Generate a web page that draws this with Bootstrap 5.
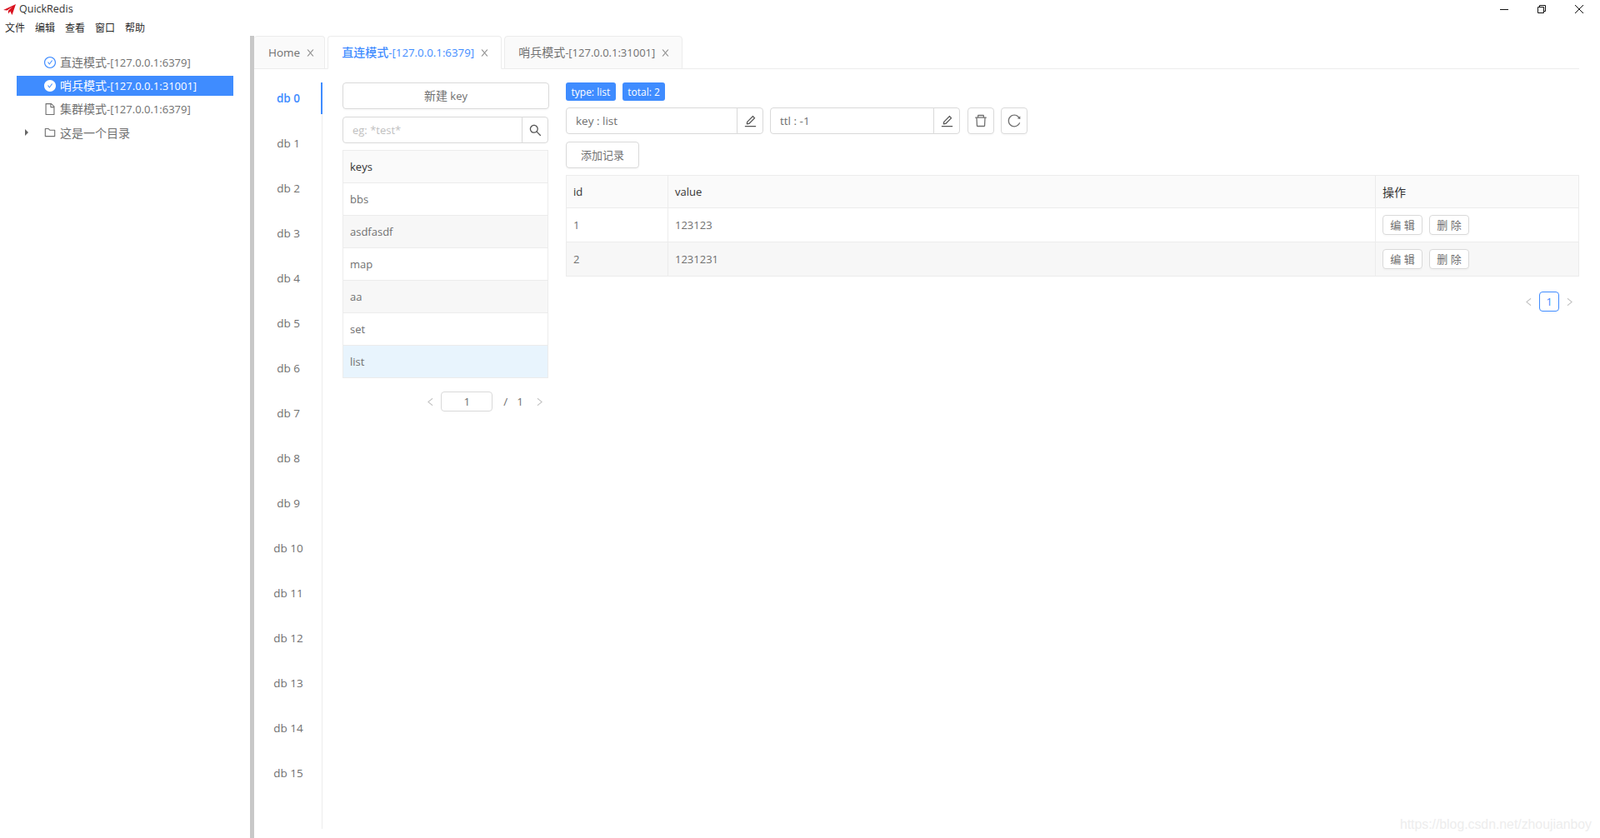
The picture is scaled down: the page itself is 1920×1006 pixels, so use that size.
<!DOCTYPE html>
<html lang="zh-CN">
<head>
<meta charset="utf-8">
<title>QuickRedis</title>
<link href="https://cdn.jsdelivr.net/npm/bootstrap@5.3.0/dist/css/bootstrap.min.css" rel="stylesheet">
<style>
:root{--qr-blue:#3f8cff;--qr-text:#707070;--qr-line:#ececec;--qr-border:#d9d9d9}
html,body{height:100%;overflow:hidden}
body{font-family:"Open Sans","Noto Sans CJK SC",sans-serif;font-size:13px;color:var(--qr-text);background:#fff;position:relative}
.zh{font-size:14px}
.ico{width:1em;height:1em;fill:currentColor;display:block;flex:none}
.qr-title{height:22px;padding-left:4px}
.qr-title-text{font-size:12.5px;color:#333;margin-left:4px}
.qr-logo{width:15px;height:13px}
.qr-winctl{gap:0;margin-right:3px}
.qr-winbtn{width:45px;height:20px;color:#111}
.qr-winbtn svg{width:12px;height:12px;fill:none;stroke:currentColor;stroke-width:1}
.qr-menu{height:21px;padding:2px 0 0 6px;gap:12px;font-size:12px;color:#2a2a2a}
.qr-main{height:963px}
.qr-side{width:300px;padding-top:20px}
.qr-split{width:5px;background:#c8c8c8}
.qr-node{height:24px;margin:0 20px 4px;width:260px;padding-left:33px;white-space:nowrap}
.qr-node .ico{font-size:14px;margin-right:5px}
.qr-node.on{background:var(--qr-blue);color:#fff}
.qr-caret{width:0;height:0;border-left:4px solid #666;border-top:4px solid transparent;border-bottom:4px solid transparent;margin-left:-23px;margin-right:19px}
.qr-content{min-width:0;padding-right:25px}
.qr-tabs{height:40px;gap:3px;border-bottom:1px solid var(--qr-line);flex-wrap:nowrap}
.qr-tabs .nav-link{height:40px;margin:0;padding:0 14px 0 16px;border:1px solid var(--qr-line);border-radius:4px 4px 0 0;background:#fafafa;color:var(--qr-text);font-size:13px;gap:7px;white-space:nowrap}
.qr-tabs .nav-link:first-child{border-left:0;padding:0 11px 0 17px;font-size:13.5px}
.qr-tabs .nav-link .ico{font-size:11px;color:#8a8a8a}
.qr-tabs .nav-link.active{background:#fff;color:var(--qr-blue);border-bottom-color:#fff;font-weight:500;font-size:13.3px}
.qr-body{padding-top:16px}
.qr-rail{width:82px;height:896px;border-right:1px solid var(--qr-line);font-size:13.5px}
.qr-db{height:38px;margin-bottom:16px;margin-right:-1px;border-right:2px solid transparent;padding-left:2px}
.qr-db.on{color:var(--qr-blue);font-weight:600;border-right-color:var(--qr-blue)}
.qr-keys{width:248px;margin-left:24px;margin-right:20px}
.qr-btn{background:#fff;border:1px solid var(--qr-border);border-radius:4px;color:var(--qr-text);font-size:13px;height:32px;padding:0;box-shadow:0 2px 0 rgba(0,0,0,.015);line-height:1}
.qr-input{height:32px;border:1px solid var(--qr-border);border-radius:4px;font-size:13.5px;color:var(--qr-text);padding:0 11px}
.qr-input::placeholder{color:#bfbfbf}
.qr-search{margin-top:9px;width:247px;margin-bottom:8px}
.qr-search .qr-input{font-size:13px}
.qr-igbtn{width:32px;flex:none;background:#fff;border:1px solid var(--qr-border);border-radius:0 4px 4px 0;margin-left:-1px;height:32px;color:#555;padding:0}
.qr-igbtn .ico{font-size:15px}
.qr-table{border-collapse:collapse;width:100%;table-layout:fixed;margin:0;font-size:13px;color:var(--qr-text)}
.qr-table th,.qr-table td{border:1px solid var(--qr-line);padding:2px 8px 0;background:#fff;color:var(--qr-text);font-weight:400;vertical-align:middle;box-shadow:none}
.qr-table th{background:#fafafa;color:#333;font-weight:500;height:39px}
.qr-table th.zh{font-weight:400;padding-top:0}
.qr-table td{height:39px}
.qr-table tr.alt td{background:#f7f7f7}
.qr-table tr.sel td{background:#e8f4fd}
.qr-table td.cell-r{height:41px}
.qr-table td.cell-o{padding-top:0}
.qr-keytable{width:247px}
.qr-keypager{height:24px;margin-top:16px;width:247px;padding-right:5px;font-size:13.5px;color:#707070}
.qr-arrow{font-size:11px;color:#bdbdbd}
.qr-arrow-end{margin-left:14px}
.qr-pageinput{width:62px;height:24px;border:1px solid var(--qr-border);border-radius:4px;text-align:center;font-size:13.5px;color:var(--qr-text);margin:0 13px 0 7px;padding:0}
.qr-slash{margin-right:11px}
.qr-right{min-width:0}
.qr-tags{gap:8px;height:22px;margin-bottom:8px;padding-top:0}
.qr-tag{background:var(--qr-blue);color:#fff;border-radius:3px;font-size:12px;font-weight:500;height:22px;padding:0 6.5px;line-height:23px}
.qr-tools{height:32px;margin-bottom:9px}
.qr-keygroup{width:237px;margin-right:8px}
.qr-ttlgroup{width:228px;margin-right:9px}
.qr-keygroup .form-control,.qr-ttlgroup .form-control{min-width:0}
.qr-square{width:32px;flex:none;margin-right:8px}
.qr-square .ico{font-size:16px;margin:auto}
.qr-add{width:88px;height:32px;margin-bottom:8px;display:block}
.col-id{width:122px}
.col-ops{width:244px}
.qr-mini{height:24px;font-size:13px;margin-right:8px;width:48px}
.qr-pager{margin-top:18px;padding-right:6px;gap:7px}
.qr-pager-cur{width:24px;height:24px;border:1px solid var(--qr-blue);border-radius:4px;color:var(--qr-blue);font-size:13.5px}
.qr-water{position:absolute;right:10px;top:978px;font-family:"Liberation Sans",sans-serif;font-size:15.8px;color:#ededed}
</style>
</head>
<body>
<svg width="0" height="0" class="position-absolute">
<symbol id="i-check" viewBox="64 64 896 896"><path d="M699 353h-46.9c-10.2 0-19.9 4.9-25.9 13.3L469 584.3l-71.2-98.8c-6-8.3-15.6-13.3-25.9-13.3H325c-6.5 0-10.3 7.4-6.5 12.7l124.6 172.8a31.8 31.8 0 0 0 51.7 0l210.6-292c3.9-5.3.1-12.7-6.4-12.7z"/><path d="M512 64C264.6 64 64 264.6 64 512s200.6 448 448 448 448-200.6 448-448S759.4 64 512 64zm0 820c-205.4 0-372-166.6-372-372s166.6-372 372-372 372 166.6 372 372-166.6 372-372 372z"/></symbol>
<symbol id="i-checkf" viewBox="64 64 896 896"><path d="M512 64C264.6 64 64 264.6 64 512s200.6 448 448 448 448-200.6 448-448S759.4 64 512 64zm193.5 301.7l-210.6 292a31.8 31.8 0 0 1-51.7 0L318.5 484.9c-3.8-5.3 0-12.7 6.5-12.7h46.9c10.2 0 19.9 4.9 25.9 13.3l71.2 98.8 157.2-218c6-8.3 15.6-13.3 25.9-13.3H699c6.5 0 10.3 7.4 6.5 12.7z"/></symbol>
<symbol id="i-file" viewBox="64 64 896 896"><path d="M854.6 288.6L639.4 73.4c-6-6-14.1-9.4-22.6-9.4H192c-17.7 0-32 14.3-32 32v832c0 17.7 14.3 32 32 32h640c17.7 0 32-14.3 32-32V311.3c0-8.5-3.4-16.7-9.4-22.7zM790.2 326H602V137.8L790.2 326zm1.8 562H232V136h302v216a42 42 0 0 0 42 42h216v494z"/></symbol>
<symbol id="i-folder" viewBox="64 64 896 896"><path d="M880 298.4H521L403.7 186.2a8.15 8.15 0 0 0-5.5-2.2H144c-17.7 0-32 14.3-32 32v592c0 17.7 14.3 32 32 32h736c17.7 0 32-14.3 32-32V330.4c0-17.7-14.3-32-32-32zM840 768H184V256h188.5l119.6 114.4H840V768z"/></symbol>
<symbol id="i-close" viewBox="64 64 896 896"><path d="M563.8 512l262.5-312.9c4.4-5.2.7-13.1-6.1-13.1h-79.8c-4.7 0-9.2 2.1-12.3 5.7L511.6 449.8 295.1 191.7c-3-3.6-7.5-5.7-12.3-5.7H203c-6.8 0-10.5 7.9-6.1 13.1L459.4 512 196.9 824.9A7.95 7.95 0 0 0 203 838h79.8c4.7 0 9.2-2.1 12.3-5.7l216.5-258.1 216.5 258.1c3 3.6 7.5 5.7 12.3 5.7h79.8c6.8 0 10.5-7.9 6.1-13.1L563.8 512z"/></symbol>
<symbol id="i-search" viewBox="64 64 896 896"><path d="M909.6 854.5L649.9 594.8C690.2 542.7 712 479 712 412c0-80.2-31.3-155.4-87.9-212.1-56.6-56.7-132-87.9-212.1-87.9s-155.5 31.3-212.1 87.9C143.2 256.5 112 331.8 112 412c0 80.1 31.3 155.5 87.9 212.1C256.5 680.8 331.8 712 412 712c67 0 130.6-21.8 182.7-62l259.7 259.6a8.2 8.2 0 0 0 11.6 0l43.6-43.5a8.2 8.2 0 0 0 0-11.6zM570.4 570.4C528 612.7 471.8 636 412 636s-116-23.3-158.4-65.6C211.3 528 188 471.8 188 412s23.3-116.1 65.6-158.4C296 211.3 352.2 188 412 188s116.1 23.2 158.4 65.6S636 352.2 636 412s-23.3 116.1-65.6 158.4z"/></symbol>
<symbol id="i-edit" viewBox="64 64 896 896"><path d="M257.7 752c2 0 4-.2 6-.5L431.9 722c2-.4 3.9-1.3 5.3-2.8l423.9-423.9a9.96 9.96 0 0 0 0-14.1L694.9 114.9c-1.9-1.9-4.4-2.9-7.1-2.9s-5.2 1-7.1 2.9L256.8 538.8c-1.5 1.5-2.4 3.3-2.8 5.3l-29.5 168.2a33.5 33.5 0 0 0 9.4 29.8c6.6 6.4 14.9 9.9 23.8 9.9zm67.4-174.4L687.8 215l73.3 73.3-362.7 362.6-88.9 15.7 15.6-89zM880 836H144c-17.7 0-32 14.3-32 32v36c0 4.4 3.6 8 8 8h784c4.4 0 8-3.6 8-8v-36c0-17.7-14.3-32-32-32z"/></symbol>
<symbol id="i-delete" viewBox="64 64 896 896"><path d="M360 184h-8c4.4 0 8-3.6 8-8v8h304v-8c0 4.4 3.6 8 8 8h-8v72h72v-80c0-35.3-28.7-64-64-64H352c-35.3 0-64 28.7-64 64v80h72v-72zm504 72H160c-17.7 0-32 14.3-32 32v32c0 4.4 3.6 8 8 8h60.4l24.7 523c1.6 34.1 29.8 61 63.9 61h454c34.2 0 62.3-26.8 63.9-61l24.7-523H888c4.4 0 8-3.6 8-8v-32c0-17.7-14.3-32-32-32zM731.3 840H292.7l-24.2-512h487l-24.2 512z"/></symbol>
<symbol id="i-reload" viewBox="64 64 896 896"><path d="M909.1 209.3l-56.4 44.1C775.8 155.1 656.2 92 521.9 92 290 92 102.3 279.5 102 511.5 101.7 743.7 289.8 932 521.9 932c181.3 0 335.8-115 394.6-276.1 1.5-4.2-.7-8.9-4.9-10.3l-56.7-19.5a8 8 0 0 0-10.1 4.8c-1.8 5-3.8 10-5.9 14.9-17.3 41-42.1 77.8-73.7 109.4A344.77 344.77 0 0 1 655.9 829c-42.3 17.9-87.4 27-133.8 27-46.5 0-91.5-9.1-133.8-27A341.5 341.5 0 0 1 279 755.2a342.16 342.16 0 0 1-73.7-109.4c-17.9-42.4-27-87.4-27-133.9s9.1-91.5 27-133.9c17.3-41 42.1-77.8 73.7-109.4 31.6-31.6 68.4-56.4 109.3-73.8 42.3-17.9 87.4-27 133.8-27 46.5 0 91.5 9.1 133.8 27a341.5 341.5 0 0 1 109.3 73.8c9.9 9.9 19.2 20.4 27.8 31.4l-60.2 47a8 8 0 0 0 3 14.1l175.6 43c5 1.2 9.9-2.6 9.9-7.7l.8-180.9c-.1-6.6-7.8-10.3-13-6.2z"/></symbol>
<symbol id="i-left" viewBox="64 64 896 896"><path d="M724 218.3V141c0-6.7-7.7-10.4-12.9-6.3L260.3 486.8a31.86 31.86 0 0 0 0 50.3l450.8 352.1c5.3 4.1 12.9.4 12.9-6.3v-77.3c0-4.9-2.3-9.6-6.1-12.6l-360-281 360-281.1c3.8-3 6.1-7.7 6.1-12.6z"/></symbol>
<symbol id="i-right" viewBox="64 64 896 896"><path d="M765.7 486.8L314.9 134.7A7.97 7.97 0 0 0 302 141v77.3c0 4.9 2.3 9.6 6.1 12.6l360 281.1-360 281.1c-3.9 3-6.1 7.7-6.1 12.6V883c0 6.7 7.7 10.4 12.9 6.3l450.8-352.1a31.96 31.96 0 0 0 0-50.4z"/></symbol>
</svg>

<header class="qr-title d-flex align-items-center">
  <svg class="qr-logo" viewBox="0 0 15 13"><path fill="#d9121f" d="M0 7 15 0 10.5 13 8.2 8.6 6 11.5 5.8 8 11 3 4.5 7.6z"/></svg>
  <span class="qr-title-text">QuickRedis</span>
  <div class="qr-winctl d-flex ms-auto">
    <div class="qr-winbtn d-flex align-items-center justify-content-center"><svg viewBox="0 0 12 12"><path d="M1 6.5h10"/></svg></div>
    <div class="qr-winbtn d-flex align-items-center justify-content-center"><svg viewBox="0 0 12 12"><path d="M1.5 3.5h7v7h-7zM3.5 3.5v-2h7v7h-2"/></svg></div>
    <div class="qr-winbtn d-flex align-items-center justify-content-center"><svg viewBox="0 0 12 12"><path d="M1 1l10 10M11 1L1 11"/></svg></div>
  </div>
</header>
<nav class="qr-menu d-flex align-items-center">
  <span>文件</span><span>编辑</span><span>查看</span><span>窗口</span><span>帮助</span>
</nav>

<main class="qr-main d-flex">
  <aside class="qr-side flex-shrink-0">
    <div class="qr-node d-flex align-items-center"><svg class="ico" style="color:#3f8cff"><use href="#i-check"/></svg><span><span class="zh">直连模式</span>-[127.0.0.1:6379]</span></div>
    <div class="qr-node on d-flex align-items-center"><svg class="ico"><use href="#i-checkf"/></svg><span><span class="zh">哨兵模式</span>-[127.0.0.1:31001]</span></div>
    <div class="qr-node d-flex align-items-center"><svg class="ico"><use href="#i-file"/></svg><span><span class="zh">集群模式</span>-[127.0.0.1:6379]</span></div>
    <div class="qr-node d-flex align-items-center"><span class="qr-caret"></span><svg class="ico"><use href="#i-folder"/></svg><span class="zh">这是一个目录</span></div>
  </aside>
  <div class="qr-split flex-shrink-0"></div>
  <section class="qr-content flex-grow-1">
    <div class="nav qr-tabs">
      <a class="nav-link d-flex align-items-center" href="#">Home<svg class="ico"><use href="#i-close"/></svg></a>
      <a class="nav-link active d-flex align-items-center" href="#"><span><span class="zh">直连模式</span>-[127.0.0.1:6379]</span><svg class="ico"><use href="#i-close"/></svg></a>
      <a class="nav-link d-flex align-items-center" href="#"><span><span class="zh">哨兵模式</span>-[127.0.0.1:31001]</span><svg class="ico"><use href="#i-close"/></svg></a>
    </div>
    <div class="qr-body d-flex">
      <div class="qr-rail flex-shrink-0">
        <div class="qr-db on d-flex align-items-center justify-content-center">db 0</div>
        <div class="qr-db d-flex align-items-center justify-content-center">db 1</div>
        <div class="qr-db d-flex align-items-center justify-content-center">db 2</div>
        <div class="qr-db d-flex align-items-center justify-content-center">db 3</div>
        <div class="qr-db d-flex align-items-center justify-content-center">db 4</div>
        <div class="qr-db d-flex align-items-center justify-content-center">db 5</div>
        <div class="qr-db d-flex align-items-center justify-content-center">db 6</div>
        <div class="qr-db d-flex align-items-center justify-content-center">db 7</div>
        <div class="qr-db d-flex align-items-center justify-content-center">db 8</div>
        <div class="qr-db d-flex align-items-center justify-content-center">db 9</div>
        <div class="qr-db d-flex align-items-center justify-content-center">db 10</div>
        <div class="qr-db d-flex align-items-center justify-content-center">db 11</div>
        <div class="qr-db d-flex align-items-center justify-content-center">db 12</div>
        <div class="qr-db d-flex align-items-center justify-content-center">db 13</div>
        <div class="qr-db d-flex align-items-center justify-content-center">db 14</div>
        <div class="qr-db d-flex align-items-center justify-content-center">db 15</div>
      </div>
      <div class="qr-keys flex-shrink-0">
        <button class="btn qr-btn w-100" type="button"><span class="zh">新建</span> key</button>
        <div class="input-group qr-search flex-nowrap">
          <input class="form-control qr-input" placeholder="eg: *test*">
          <button class="btn qr-igbtn d-flex align-items-center justify-content-center" type="button"><svg class="ico"><use href="#i-search"/></svg></button>
        </div>
        <table class="table qr-table qr-keytable">
          <thead><tr><th>keys</th></tr></thead>
          <tbody>
            <tr><td>bbs</td></tr>
            <tr class="alt"><td>asdfasdf</td></tr>
            <tr><td>map</td></tr>
            <tr class="alt"><td>aa</td></tr>
            <tr><td>set</td></tr>
            <tr class="sel"><td>list</td></tr>
          </tbody>
        </table>
        <div class="qr-keypager d-flex align-items-center justify-content-end">
          <svg class="ico qr-arrow"><use href="#i-left"/></svg>
          <input class="qr-pageinput" value="1">
          <span class="qr-slash">/</span><span>1</span>
          <svg class="ico qr-arrow qr-arrow-end"><use href="#i-right"/></svg>
        </div>
      </div>
      <div class="qr-right flex-grow-1">
        <div class="qr-tags d-flex">
          <span class="badge qr-tag">type: list</span>
          <span class="badge qr-tag">total: 2</span>
        </div>
        <div class="qr-tools d-flex">
          <div class="input-group flex-nowrap qr-keygroup">
            <input class="form-control qr-input" value="key : list">
            <button class="btn qr-igbtn d-flex align-items-center justify-content-center" type="button"><svg class="ico"><use href="#i-edit"/></svg></button>
          </div>
          <div class="input-group flex-nowrap qr-ttlgroup">
            <input class="form-control qr-input" value="ttl : -1">
            <button class="btn qr-igbtn d-flex align-items-center justify-content-center" type="button"><svg class="ico"><use href="#i-edit"/></svg></button>
          </div>
          <button class="btn qr-btn qr-square d-flex" type="button"><svg class="ico"><use href="#i-delete"/></svg></button>
          <button class="btn qr-btn qr-square d-flex" type="button"><svg class="ico"><use href="#i-reload"/></svg></button>
        </div>
        <button class="btn qr-btn qr-add zh" type="button">添加记录</button>
        <table class="table qr-table">
          <colgroup><col class="col-id"><col><col class="col-ops"></colgroup>
          <thead><tr><th>id</th><th>value</th><th class="zh">操作</th></tr></thead>
          <tbody>
            <tr><td class="cell-r">1</td><td>123123</td><td class="cell-o"><button class="btn qr-btn qr-mini zh" type="button">编 辑</button><button class="btn qr-btn qr-mini zh" type="button">删 除</button></td></tr>
            <tr class="alt"><td class="cell-r">2</td><td>1231231</td><td class="cell-o"><button class="btn qr-btn qr-mini zh" type="button">编 辑</button><button class="btn qr-btn qr-mini zh" type="button">删 除</button></td></tr>
          </tbody>
        </table>
        <div class="qr-pager d-flex align-items-center justify-content-end">
          <svg class="ico qr-arrow"><use href="#i-left"/></svg>
          <span class="qr-pager-cur d-flex align-items-center justify-content-center">1</span>
          <svg class="ico qr-arrow"><use href="#i-right"/></svg>
        </div>
      </div>
    </div>
  </section>
</main>
<div class="qr-water">https://blog.csdn.net/zhoujianboy</div>
<script src="https://cdn.jsdelivr.net/npm/bootstrap@5.3.0/dist/js/bootstrap.bundle.min.js"></script>
</body>
</html>
